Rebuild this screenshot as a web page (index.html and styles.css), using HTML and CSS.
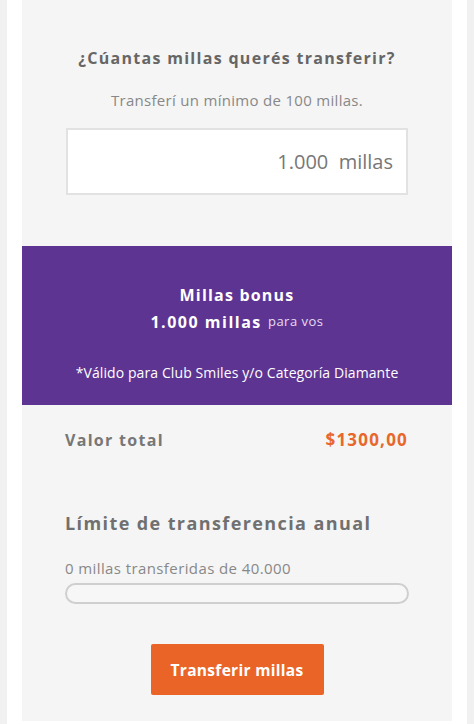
FILE: index.html
```html
<!DOCTYPE html>
<html lang="es">
<head>
<meta charset="utf-8">
<link rel="stylesheet" href="styles.css">
</head>
<body>
<div class="frame">
  <div class="card">
    <section class="amount">
      <h1 class="title">¿Cúantas millas querés transferir?</h1>
      <p class="hint">Transferí un mínimo de 100 millas.</p>
      <div class="input"><span>1.000&nbsp; millas</span></div>
    </section>
    <section class="bonus">
      <div class="bonus-title">Millas bonus</div>
      <div class="bonus-amount"><b>1.000 millas</b> <span>para vos</span></div>
      <div class="bonus-note">*Válido para Club Smiles y/o Categoría Diamante</div>
    </section>
    <section class="total">
      <span class="total-label">Valor total</span>
      <span class="total-value">$1300,00</span>
    </section>
    <section class="limit">
      <h2 class="limit-title">Límite de transferencia anual</h2>
      <p class="limit-text">0 millas transferidas de 40.000</p>
      <div class="bar"><div class="bar-fill" style="width:0%"></div></div>
    </section>
    <div class="actions">
      <button class="btn">Transferir millas</button>
    </div>
  </div>
</div>
</body>
</html>
```

FILE: styles.css
```css
* { box-sizing: border-box; }
html, body { margin: 0; padding: 0; }
body {
  background: #f1f1f1;
  font-family: "Open Sans", Lato, sans-serif;
  height: 724px;
  overflow: hidden;
}
.frame {
  margin: 0 7px;
  background: #fff;
  padding: 0 15px 3px;
  height: 724px;
}
.card {
  background: #f5f5f5;
  height: 721px;
  display: flex;
  flex-direction: column;
}
.amount {
  padding: 46px 44px 51px;
  display: flex;
  flex-direction: column;
  align-items: center;
}
.title {
  margin: 0;
  font-size: 16px;
  font-weight: 700;
  color: #666;
  letter-spacing: 1.3px;
  line-height: 24px;
}
.hint {
  margin: 20px 0 0;
  font-size: 15px;
  letter-spacing: 0.3px;
  color: #888;
  line-height: 20px;
}
.input {
  margin-top: 18px;
  align-self: stretch;
  height: 67px;
  background: #fff;
  border: 2px solid #e2e2e2;
  display: flex;
  align-items: center;
  justify-content: flex-end;
  padding-right: 13px;
  font-size: 20px;
  color: #777;
}
.bonus {
  background: #5e3493;
  color: #fff;
  height: 159px;
  display: flex;
  flex-direction: column;
  align-items: center;
  padding-top: 38px;
}
.bonus-title {
  font-size: 16px;
  font-weight: 700;
  letter-spacing: 1.2px;
  line-height: 22px;
}
.bonus-amount {
  margin-top: 4px;
  line-height: 22px;
}
.bonus-amount b {
  font-size: 16px;
  letter-spacing: 1.5px;
}
.bonus-amount span {
  font-size: 13px;
  letter-spacing: 0.5px;
  color: #e6ddf1;
  margin-left: 2px;
  vertical-align: 2px;
}
.bonus-note {
  margin-top: 30px;
  font-size: 14px;
  letter-spacing: 0.1px;
  line-height: 20px;
}
.total {
  display: flex;
  justify-content: space-between;
  align-items: center;
  padding: 21px 44px 0 43px;
  height: 48px;
}
.total-label {
  font-size: 16px;
  font-weight: 700;
  color: #777;
  letter-spacing: 1.3px;
}
.total-value {
  font-size: 17px;
  font-weight: 700;
  color: #e8672a;
  letter-spacing: 1.2px;
}
.limit {
  padding: 58px 43px 0 43px;
}
.limit-title {
  margin: 0;
  font-size: 18px;
  font-weight: 700;
  color: #707070;
  letter-spacing: 1.4px;
  line-height: 24px;
}
.limit-text {
  margin: 23px 0 0;
  font-size: 15px;
  letter-spacing: 0.4px;
  color: #888;
  line-height: 20px;
}
.bar {
  margin-top: 5px;
  height: 21px;
  border: 2px solid #cfcfcf;
  border-radius: 11px;
  background: #f7f7f7;
  overflow: hidden;
}
.bar-fill {
  height: 100%;
  background: #e8672a;
}
.actions {
  display: flex;
  justify-content: center;
  padding-top: 40px;
}
.btn {
  width: 173px;
  height: 51px;
  background: #ea6428;
  border: none;
  border-radius: 2px;
  color: #fff;
  font-family: inherit;
  font-size: 15.5px;
  font-weight: 700;
  letter-spacing: 0.3px;
}
```
